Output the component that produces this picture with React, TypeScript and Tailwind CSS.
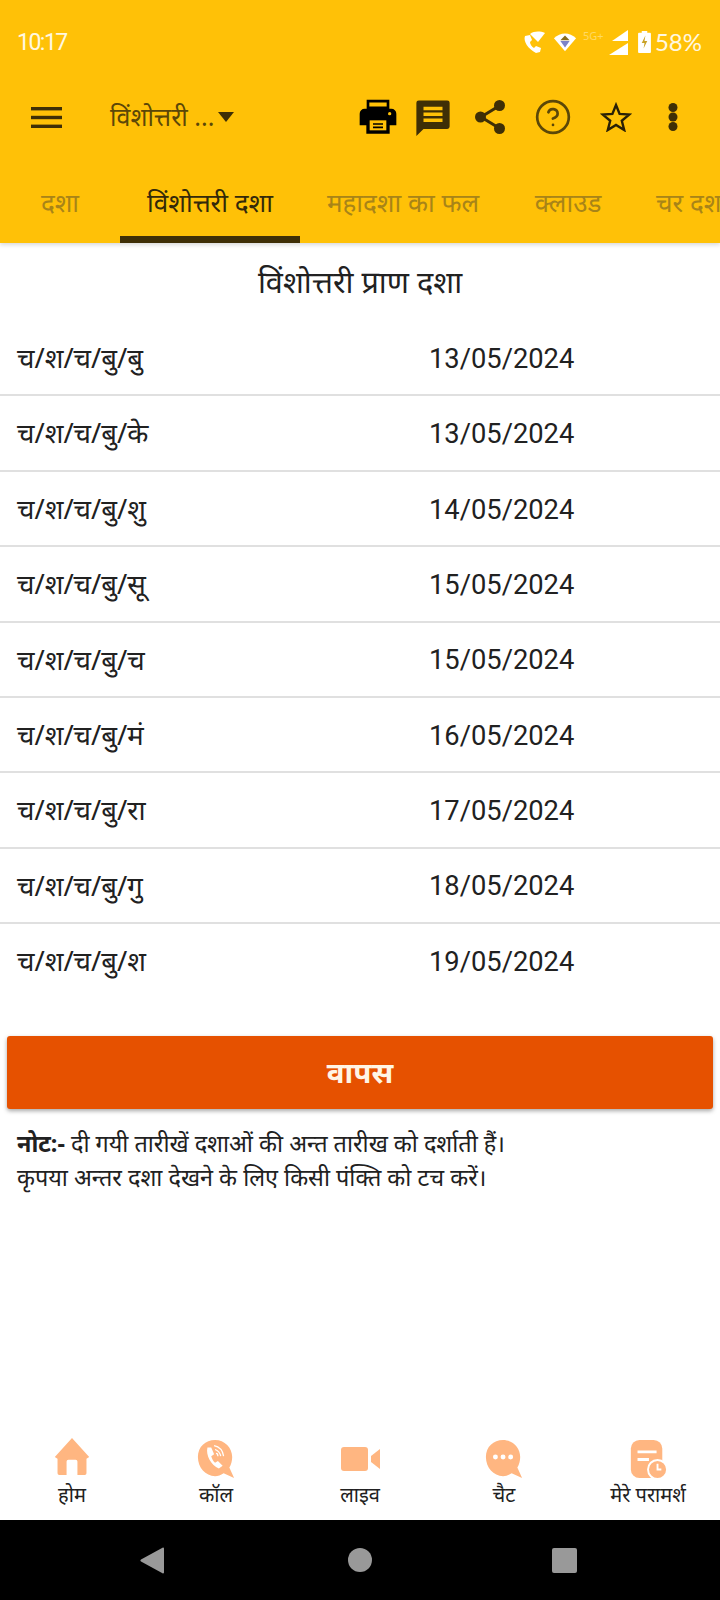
import { CircleHelp } from "lucide-react";

const font = { fontFamily: '"Noto Sans", Roboto, sans-serif' };

const rows = [
  ["च/श/च/बु/बु", "13/05/2024"],
  ["च/श/च/बु/के", "13/05/2024"],
  ["च/श/च/बु/शु", "14/05/2024"],
  ["च/श/च/बु/सू", "15/05/2024"],
  ["च/श/च/बु/च", "15/05/2024"],
  ["च/श/च/बु/मं", "16/05/2024"],
  ["च/श/च/बु/रा", "17/05/2024"],
  ["च/श/च/बु/गु", "18/05/2024"],
  ["च/श/च/बु/श", "19/05/2024"],
];

function Printer() {
  return (
    <svg width="40" height="40" viewBox="0 0 24 24">
      <path d="M6 2.5h12v4H6z" fill="none" stroke="#000" strokeWidth="1.6" />
      <path d="M4 7h16a3 3 0 0 1 3 3v7h-4v5H5v-5H1v-7a3 3 0 0 1 3-3z" fill="#000" />
      <path d="M7 14h10v6H7z" fill="#ffc107" />
      <path d="M9 15.7h6v1H9zM9 17.7h6v1H9z" fill="#000" />
      <circle cx="19" cy="10" r="1" fill="#ffc107" />
    </svg>
  );
}

function Message() {
  return (
    <svg width="38" height="40" viewBox="0 0 24 24">
      <path d="M3 1.5h18a1.5 1.5 0 0 1 1.5 1.5v15a1.5 1.5 0 0 1-1.5 1.5H6L1.5 24V3A1.5 1.5 0 0 1 3 1.5z" fill="#3f2f06" />
      <path d="M6 5.5h12v2.2H6zM6 9.2h12v2.2H6zM6 13h12v2.2H6z" fill="#ffc107" />
    </svg>
  );
}

function MenuIcon() {
  return (
    <svg width="31" height="21" viewBox="0 0 31 21" fill="#3f2f06">
      <rect y="0" width="31" height="3.4" />
      <rect y="8.8" width="31" height="3.4" />
      <rect y="17.6" width="31" height="3.4" />
    </svg>
  );
}

function ShareIcon() {
  return (
    <svg width="30" height="34" viewBox="0 0 30 34" fill="#3f2f06">
      <path d="M24 6L6 17l18 11" fill="none" stroke="#3f2f06" strokeWidth="3" />
      <circle cx="24.5" cy="5.5" r="5.5" />
      <circle cx="5.5" cy="17" r="5.5" />
      <circle cx="24.5" cy="28.5" r="5.5" />
    </svg>
  );
}

function StarIcon() {
  return (
    <svg width="32" height="30" viewBox="0 0 32 30">
      <path d="M16 3l3.6 8.9 9.6.7-7.4 6.1 2.4 9.3-8.2-5.1-8.2 5.1 2.4-9.3-7.4-6.1 9.6-.7z" fill="none" stroke="#2a2006" strokeWidth="2.4" />
    </svg>
  );
}

function DotsIcon() {
  return (
    <svg width="12" height="28" viewBox="0 0 12 28" fill="#3f2f06">
      <circle cx="6" cy="4.5" r="4.5" />
      <circle cx="6" cy="14" r="4.5" />
      <circle cx="6" cy="23.5" r="4.5" />
    </svg>
  );
}

function StatusIcons() {
  return (
    <div className="flex items-center">
      <svg width="23" height="24" viewBox="0 0 23 24" fill="#fff">
        <path d="M2 6c-2 5 3 13 11 17l4-1 1-4-5-2-2 2c-2-1-4-4-4-6l2-2-2-5z" />
        <path d="M7 4c4-3 10-3 15-1l-7 9z" />
      </svg>
      <svg width="24" height="22" viewBox="0 0 26 22" className="ml-[7px]">
        <path d="M1 7c7-7 17-7 24 0L13 21z" fill="#fff" />
        <path d="M13 4l5 5H8z" fill="#8a6d1a" />
        <path d="M8 10h10l-5 7z" fill="#7c83c8" />
      </svg>
      <span className="relative -top-[7px] ml-[6px] w-[23px] text-[11px] leading-none text-[#ffd964]">5G+</span>
      <svg width="19" height="25" viewBox="0 0 19 25" fill="#fff" className="ml-[3px]">
        <path d="M19 0v11H3z" />
        <path d="M19 13v12H0z" />
      </svg>
      <svg width="13" height="22" viewBox="0 0 14 24" className="ml-[10px]">
        <path d="M4 0h6v2h3a1 1 0 0 1 1 1v20a1 1 0 0 1-1 1H1a1 1 0 0 1-1-1V3a1 1 0 0 1 1-1h3z" fill="#fff" />
        <path d="M8 5L4 13h3l-1 6 4-8H7z" fill="#c9a227" />
      </svg>
      <span className="ml-[4px] text-[24px] text-[#fff8e1]" style={{ fontFamily: "Lato, sans-serif" }}>58%</span>
    </div>
  );
}

function HomeIcon() {
  return (
    <svg width="40" height="38" viewBox="0 0 40 42" fill="#ffb681" className="-mt-[4px]">
      <path d="M20 0l19 21-3 2v16a2 2 0 0 1-2 2h-8V26a2 2 0 0 0-2-2h-8a2 2 0 0 0-2 2v15H6a2 2 0 0 1-2-2V23l-3-2z" />
    </svg>
  );
}

function CallIcon() {
  return (
    <svg width="40" height="40" viewBox="0 0 40 42">
      <path d="M19 1c10 0 18 8 18 18 0 4-1 8-3 11l5 11-11-5c-3 2-6 3-9 3C9 39 1 30 1 19S9 1 19 1z" fill="#ffb681" />
      <path d="M11 9c-2 8 4 19 12 22l4-3-5-5-3 2c-2-2-3-4-4-7l3-2-3-7z" fill="#fff" />
      <path d="M18 7c5 1 9 5 10 11M19 11c3 1 5 3 6 7M20 15c1 0 2 1 2 3" fill="none" stroke="#fff" strokeWidth="1.3" />
    </svg>
  );
}

function VideoIcon() {
  return (
    <svg width="39" height="24" viewBox="0 0 39 24" fill="#ffb681">
      <rect x="0" y="0" width="27" height="24" rx="3" />
      <path d="M39 2v20l-9-7V9z" />
    </svg>
  );
}

function ChatIcon() {
  return (
    <svg width="40" height="40" viewBox="0 0 40 42">
      <path d="M19 1c10 0 18 8 18 18 0 4-1 8-3 11l5 11-11-5c-3 2-6 3-9 3C9 39 1 30 1 19S9 1 19 1z" fill="#ffb681" />
      <circle cx="11" cy="19" r="2.6" fill="#fff" />
      <circle cx="19" cy="19" r="2.6" fill="#fff" />
      <circle cx="27" cy="19" r="2.6" fill="#fff" />
    </svg>
  );
}

function ConsultIcon() {
  return (
    <svg width="40" height="40" viewBox="0 0 40 42">
      <rect x="2" y="1" width="33" height="40" rx="9" fill="#ffb681" />
      <path d="M9 12h20v3H9zM9 20h12v3H9z" fill="#fff" />
      <circle cx="30" cy="32" r="10" fill="#ffb681" stroke="#fff" strokeWidth="2" />
      <path d="M30 26v6h4" fill="none" stroke="#fff" strokeWidth="2" />
    </svg>
  );
}

const navItems = [
  { label: "होम", icon: <HomeIcon /> },
  { label: "कॉल", icon: <CallIcon /> },
  { label: "लाइव", icon: <VideoIcon /> },
  { label: "चैट", icon: <ChatIcon /> },
  { label: "मेरे परामर्श", icon: <ConsultIcon /> },
];

export default function App() {
  return (
    <div className="flex h-[1600px] w-[720px] flex-col overflow-hidden bg-white" style={font}>
      <header className="z-10 h-[243px] shrink-0 bg-[#ffc107] shadow-[0_2px_4px_rgba(0,0,0,0.15)]">
        <div className="flex h-[84px] items-center justify-between pl-[17px] pr-[18px]">
          <span className="pt-[3px] text-[23px] tracking-[-1.5px] text-[#fff8e1]" style={{ fontFamily: "Roboto, sans-serif" }}>10:17</span>
          <StatusIcons />
        </div>
        <div className="flex h-[66px] items-center pl-[31px]">
          <MenuIcon />
          <span className="ml-[48px] w-[108px] whitespace-nowrap text-[25px] text-[#5b4708]">विंशोत्तरी ...</span>
          <span className="h-0 w-0 border-x-[8px] border-t-[10px] border-x-transparent border-t-[#3f2f06]" />
          <div className="ml-[124px]"><Printer /></div>
          <div className="ml-[16px]"><Message /></div>
          <div className="ml-[23px]"><ShareIcon /></div>
          <CircleHelp size={38} className="ml-[29px] text-[#5b4708]" strokeWidth={1.7} />
          <div className="ml-[28px]"><StarIcon /></div>
          <div className="ml-[35px]"><DotsIcon /></div>
        </div>
        <div className="flex h-[93px] overflow-hidden text-[26px]">
          <div className="flex w-[120px] shrink-0 items-center justify-center pt-[11px] text-[#a88418]">दशा</div>
          <div className="relative flex w-[180px] shrink-0 items-center justify-center pt-[11px] text-[#33290a]">
            विंशोत्तरी दशा
            <span className="absolute bottom-0 left-0 h-[7px] w-full bg-[#3f2f06]" />
          </div>
          <div className="flex w-[206px] shrink-0 items-center justify-center pt-[11px] text-[#a88418]">महादशा का फल</div>
          <div className="flex w-[124px] shrink-0 items-center justify-center pt-[11px] text-[#a88418]">क्लाउड</div>
          <div className="flex shrink-0 items-center whitespace-nowrap pl-[26px] pt-[11px] text-[#a88418]">चर दशा</div>
        </div>
      </header>

      <main className="flex flex-1 flex-col">
        <h1 className="flex h-[78px] items-center justify-center pb-[2px] text-[30.700px] text-[#212121]">विंशोत्तरी प्राण दशा</h1>
        <div>
          {rows.map(([name, date], i) => (
            <div
              key={i}
              className={`flex h-[75.4px] items-center border-b-2 ${i < rows.length - 1 ? "border-[#e0e0e0]" : "border-transparent"}`}
            >
              <span className="w-[429px] pl-[17px] text-[27.5px] text-[#212121]">{name}</span>
              <span className="pt-[3px] text-[27.3px] text-[#212121]" style={{ fontFamily: "Roboto, sans-serif" }}>{date}</span>
            </div>
          ))}
        </div>
        <button
          type="button"
          className="mx-[7px] mt-[36px] flex h-[73px] shrink-0 items-center justify-center rounded-[3px] bg-[#e65100] text-[29.5px] font-bold text-[#fff5e6] shadow-[0_2px_4px_rgba(0,0,0,0.35)]"
        >
          वापस
        </button>
        <p className="mt-[17px] px-[17px] text-[23.4px] leading-[34px] text-[#212121]">
          <b>नोट:-</b> दी गयी तारीखें दशाओं की अन्त तारीख को दर्शाती हैं।
          <br />
          कृपया अन्तर दशा देखने के लिए किसी पंक्ति को टच करें।
        </p>
        <nav className="mt-auto flex h-[86px] items-start">
          {navItems.map((item) => (
            <div key={item.label} className="flex h-[86px] w-[144px] flex-col items-center">
              <div className="mt-[3px] flex h-[44px] items-center">{item.icon}</div>
              <span className="mt-[1px] whitespace-nowrap text-[20px] leading-[26px] text-[#212121]">{item.label}</span>
            </div>
          ))}
        </nav>
      </main>

      <div className="flex h-[80px] shrink-0 items-center bg-black">
        <svg width="24" height="27" viewBox="0 0 24 27" className="ml-[140px]">
          <path d="M23 0.5c.5 0 1 .5 1 1v24c0 .7-.8 1.2-1.5.7L1 14.500c-.8-.5-.8-1.500 0-2L22.500 .7z" fill="#999" />
        </svg>
        <span className="ml-[184px] h-[24px] w-[24px] rounded-full bg-[#999]" />
        <span className="ml-[180px] h-[25px] w-[25px] rounded-[2px] bg-[#999]" />
      </div>
    </div>
  );
}
